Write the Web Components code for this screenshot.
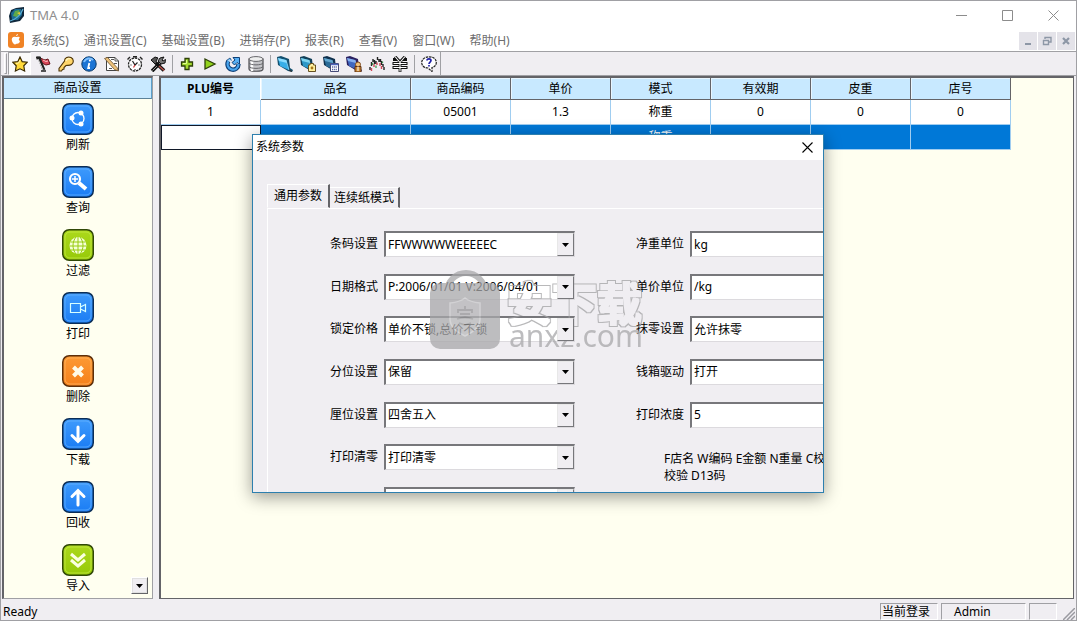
<!DOCTYPE html>
<html lang="zh-CN">
<head>
<meta charset="utf-8">
<title>TMA 4.0</title>
<style>
  html, body { margin: 0; height: 100%; }
  body {
    font: 12px/16px "Noto Sans", "Noto Sans CJK SC", sans-serif;
    color: #000;
    overflow: hidden;
    --face: #f0eef2;
    --cream: #fffff0;
    --head: #c8e9ff;
    --select: #0078d7;
    --dark: #646468;
    --mid: #a0a0a4;
  }
</style>
</head>
<body>
<app-window></app-window>

<script>
const reset = `
  *, *::before { box-sizing: border-box; }
  button { font: inherit; color: inherit; background: none; border: 0; padding: 0; margin: 0; }
  svg { display: block; }
`;

function element(name, render) {
  customElements.define(name, class extends HTMLElement {
    connectedCallback() {
      if (this.shadowRoot) return;
      const t = document.createElement('template');
      t.innerHTML = render(this);
      this.attachShadow({ mode: 'open' }).append(t.content.cloneNode(true));
    }
  });
}

/* ---------- icons ---------- */
const folder = (light, face, back) => `
  <path d="M0 1 4 0 12 3 13 12 16 14 15 16 11 15 1 9Z" fill="${back}"/>
  <path d="M1 2 9 4 12 14 3 10Z" fill="${face}"/><path d="M1 2 9 4 10 7 2 5Z" fill="${light}"/>
  <path d="M9 4 12 14" stroke="${light}" stroke-width=".8"/><path d="M12 14 15 15.500" stroke="#333" stroke-width="1.200"/>`;
const toolIcons = {
  star: `<path d="M8 1 10.2 5.7 15.3 6.2 11.8 9.8 12.6 15 8 12.8 3.4 15 4.2 9.8.7 6.2 5.8 5.7Z" fill="#ffd93a" stroke="#3a2a00" stroke-width="1.2"/><path d="M8 4 6.6 7 4 7.4" stroke="#fff6b0" fill="none"/>`,
  flag: `<path d="M5 2 10 4 13 3 15 8 11 9 7 7Z" fill="#d8485a" stroke="#641218"/><path d="M8 4 11 5.500 13 5" stroke="#ffc0c0" fill="none"/><path d="M1.500 2 4 2 9 14" stroke="#222" stroke-width="3" fill="none"/><path d="M3 3 8 14" stroke="#ddd" stroke-width="1"/><path d="M1 1.500H6M6 15H11" stroke="#222" stroke-width="1.400"/>`,
  key: `<path d="M6.500 5C6.500 1.500 10 .5 13 1.500 16 3 16 7 13.500 8.500 11 10 9 9 8 9.500L6 11.500V13L4.500 13.500 3.500 15 1 15 1 12.500Z" fill="#ffd56a" stroke="#4d3408" stroke-width="1.100"/><path d="M8 5C8.500 2.500 11 2 12.500 3" stroke="#fff2b8" stroke-width="1.500" fill="none"/>`,
  info: `<circle cx="8" cy="8" r="7.2" fill="#1c74d4" stroke="#083868"/><path d="M3 6A5.5 5.5 0 0 1 12 4" stroke="#7ec0ff" stroke-width="2" fill="none"/><path d="M8.3 7 7.2 12H9" stroke="#fff" stroke-width="1.8" fill="none"/><circle cx="8.9" cy="4.5" r="1.1" fill="#fff"/>`,
  edit: `<path d="M2.500 1.500H11L14.500 5V14.500H2.500Z" fill="#fff" stroke="#444"/><path d="M11 1.500V5H14.500M7 3.500H10M5 12.500H8M10 7.500H13" stroke="#555" fill="none"/><path d="M.5 2.500 3.500 1.500 13 11.500 14.500 15 10.500 13.500Z" fill="#edc27a" stroke="#6a5030" stroke-width=".8"/>`,
  clock: `<circle cx="8" cy="8.500" r="6.500" fill="#fff" stroke="#222" stroke-width="1.300" stroke-dasharray="2.500 .8"/><path d="M5.500 5 8 9 10.500 6.500" stroke="#222" stroke-width="1.200" fill="none"/><path d="M8 9 6.500 11.500" stroke="#c33" stroke-width="1.200"/><path d="M.5 3.500 3 1M13 1 15.500 3.500M6 .8H10" stroke="#222" stroke-width="1.400"/><path d="M3.500 9H4.500M11.500 9H12.500M8 13V14" stroke="#222"/>`,
  tools: `<path d="M2 15 12 5" stroke="#111" stroke-width="3.600"/><path d="M2.500 14.500 11 6" stroke="#999" stroke-width="1"/><path d="M10 2 14 1 12 4 13 5 15.500 3.500 15 7 11 8 8 5Z" fill="#777" stroke="#111"/><path d="M1 4 5 1 8 2 6 5 7 7 5 8 3 6Z" fill="#555" stroke="#111"/><path d="M6 7 14 14.500" stroke="#111" stroke-width="3.600"/><path d="M9 10 14 14.500" stroke="#b55048" stroke-width="1.600"/>`,
  plus: `<path d="M6 2.500H10V6H13.500V10H10V13.500H6V10H2.500V6H6Z" fill="#a4da30" stroke="#2d4008" stroke-width="1.300"/><path d="M7.500 4V7.500H4" stroke="#e0ff90" fill="none"/>`,
  play: `<path d="M3 3 13 8 3 13Z" fill="#93d31d" stroke="#2d4008" stroke-width="1.300"/>`,
  reload: `<path d="M3.500 5A5.500 5.500 0 1 0 13.500 8" stroke="#0d3f77" stroke-width="4.400" fill="none"/><path d="M8 1.500H14.500V8.500L12 6.500 9.500 9 7 6.500 10 4Z" fill="#58b0f4" stroke="#0d3f77"/><path d="M3.500 5A5.500 5.500 0 1 0 13.500 8" stroke="#49a5ee" stroke-width="2.200" fill="none"/><path d="M1.500 4.500 5 2 6.500 4.500" fill="#7cc6fa" stroke="#0d3f77" stroke-width=".8"/>`,
  database: `<path d="M1 3V13C1 16 15 16 15 13V3Z" fill="#c4c4c8" stroke="#4c4c50" stroke-width="1.200"/><path d="M4 5V15" stroke="#fff" stroke-width="2.500"/><ellipse cx="8" cy="3" rx="7" ry="2.400" fill="#eee" stroke="#66666a"/><path d="M1 7C2 9.500 14 9.500 15 7M1 10.500C2 13 14 13 15 10.500" stroke="#66666a" fill="none"/>`,
  folder1: folder('#8adcff', '#36aee8', '#14506f'),
  folder2: folder('#7ed4f0', '#2c98c8', '#123f58') + `<path d="M8.500 9 10 9 10 7.500H13.500V9H15.500V15.500H8.500Z" fill="#fff1a0" stroke="#665020"/><circle cx="12" cy="12" r="1.400" fill="#a87818"/>`,
  folder3: folder('#64a8d0', '#2c6c98', '#10304c') + `<path d="M7.500 7.500H15.500V15.500H7.500Z" fill="#fff" stroke="#444a78"/><path d="M8 8.500H15" stroke="#4c65bd" stroke-width="1.500"/><path d="M9 11H14M9 13.500H14" stroke="#5060a0" stroke-width="1.300" stroke-dasharray="1.300 .8"/>`,
  folder4: folder('#86b0f0', '#4068c0', '#2a2060') + `<circle cx="12" cy="8.500" r="2.500" fill="#f2c27a" stroke="#7d4a20"/><path d="M9 10.500H15V16H9Z" fill="#ca8934" stroke="#603010"/><path d="M12 10.500V15" stroke="#fff"/>`,
  chart: `<path d="M1 14V11M2.500 10V6M4 6V3M5.500 4V8M7 8V5M8.500 4V1M10 3V6M11.500 6V3M12.500 5V9M14 8V11M15 11V14" stroke="#222" stroke-width="1.400"/><path d="M2.500 15V12M5 11V8M8 9V6.500M11 10V7M12.500 13V10" stroke="#d04858" stroke-width="1.400"/><path d="M3.500 9V7M13.500 7V5.500M7 12V9.500" stroke="#3f9c50" stroke-width="1.300"/>`,
  yen: `<path d="M3 .5 8 6 13 .5M8 5V16M1 3.500H4.500M11.500 3.500H15M.5 7.500H15.500M.5 11.500H15.500" stroke="#111" stroke-width="2.800" fill="none"/><path d="M3 .5 8 6.500 13 .5M8 6V15.500M1.500 7.500H14.500M1.500 11.500H14.500" stroke="#fff" stroke-width="1.100" fill="none"/>`,
  help: `<path d="M8 .8C13 .8 15.300 3.500 15.300 6.500S13 11 11 11.500L11 15.500 7 12C3 12 .7 9.500 .7 6.500S4 .8 8 .8Z" fill="#fff" stroke="#222" stroke-width="1.200" stroke-dasharray="2.500 .8"/><path d="M6 4.500C6 2.200 10 2.200 10 4.500 10 6 8 6.200 8 8M8 9V10.500" stroke="#2020a8" stroke-width="1.700" fill="none"/>`
};
const sideIcons = {
  share: `<circle cx="16" cy="15.500" r="6" fill="none" stroke="#fff" stroke-width="1.300"/><circle cx="10" cy="15" r="2.500" fill="#fff"/><circle cx="19" cy="10" r="2.500" fill="#fff"/><circle cx="19" cy="21" r="2.500" fill="#fff"/>`,
  search: `<circle cx="13" cy="13" r="5" fill="none" stroke="#fff" stroke-width="2.200"/><path d="M13 10V16M10 13H16" stroke="#fff" stroke-width="1.500"/><path d="M17 17 24 23" stroke="#fff" stroke-width="4"/>`,
  globe: `<circle cx="16" cy="16.500" r="8.500" fill="#f6ffd8"/><path d="M16 8V25M8.500 13H23.500M7.500 17H24.500M8.500 21H23.500M14 8C10 13 10 20 14 25M18 8C22 13 22 20 18 25" stroke="#96cb10" fill="none"/>`,
  video: `<path d="M8.500 11.500H18.500V20.500H8.500ZM18.500 15 23.500 12.500V19.500L18.500 17" stroke="#d8ffff" stroke-width="1.200" fill="none"/>`,
  cross: `<path d="M11.500 12 20.500 21M20.500 12 11.500 21" stroke="#fffbe8" stroke-width="4" fill="none"/>`,
  down: `<path d="M16 9V23M10 17.500 16 23.500 22 17.500" stroke="#fff" stroke-width="3" fill="none" stroke-linecap="round"/>`,
  up: `<path d="M16 24V10M10 15.500 16 9.500 22 15.500" stroke="#fff" stroke-width="3" fill="none" stroke-linecap="round"/>`,
  chevrons: `<path d="M9 10 16 16 23 10M9 16 16 22 23 16" stroke="#faffe0" stroke-width="3" fill="none"/>`
};
const tileColours = {
  blue: ['#3f9bfc', '#1a7cf4', '#0b2e57', '#6bb6ff'],
  green: ['#acd91c', '#96c908', '#304806', '#c8ec4c'],
  orange: ['#fd9a34', '#f5801a', '#5d2f0a', '#ffb968']
};

/* ---------- window frame ---------- */
element('app-window', () => `
  <style>${reset}
    :host { display: flex; flex-direction: column; position: relative; height: 100vh; box-sizing: border-box;
      border: 1px solid var(--mid); background: var(--face); overflow: hidden; }
    main { flex: 1; min-height: 0; display: flex; gap: 6px; padding: 0 1px; }
    side-panel { flex: none; }
    data-grid { flex: 1; min-width: 0; }
    param-dialog { position: absolute; left: 251px; top: 133px; }
    site-mark { position: absolute; left: 429px; top: 268px; }
  </style>
  <title-bar>TMA 4.0</title-bar>
  <menu-bar></menu-bar>
  <tool-bar></tool-bar>
  <main><side-panel></side-panel><data-grid></data-grid></main>
  <status-bar></status-bar>
  <param-dialog></param-dialog>
  <site-mark></site-mark>
`);

element('title-bar', () => `
  <style>${reset}
    :host { display: flex; align-items: center; height: 30px; padding-bottom: 2px; box-sizing: border-box; flex: none; background: #fff; color: #8f8f8f; font-size: 13px; }
    .logo { margin: 0 5px 0 8px; }
    .name { flex: 1; }
    button { width: 46px; height: 28px; display: grid; place-items: center; }
  </style>
  <svg class="logo" width="16" height="16" viewBox="0 0 16 16"><path d="M2 3 7 1 15 0 15 9 11 14 1 16 0 9Z" fill="#10283c"/><path d="M2 6 6 2 12 2 13 8 9 13 3 13Z" fill="#1c6c94"/><path d="M6 4 10 3 11 6 8 10 4 9Z" fill="#5fa848"/><path d="M1 14C6 13 12 8 14 2" stroke="#5cb0d6" stroke-width="1.200" fill="none"/><path d="M8 6 11 5 11 8Z" fill="#e0c53a"/></svg>
  <span class="name"><slot></slot></span>
  <button aria-label="最小化"><svg width="11" height="11"><path d="M0 5.500H11" stroke="#8c8c8c"/></svg></button>
  <button aria-label="最大化"><svg width="11" height="11"><path d="M.5.5H10.500V10.500H.5Z" stroke="#8c8c8c" fill="none"/></svg></button>
  <button aria-label="关闭"><svg width="11" height="11"><path d="M.5.5 10.500 10.500M10.500.5.5 10.500" stroke="#8c8c8c" fill="none"/></svg></button>
`);

element('menu-bar', () => `
  <style>${reset}
    :host { display: flex; height: 21px; flex: none; background: #fff; border-bottom: 1px solid var(--mid); color: #6d6d6d; }
    .logo { margin: 1px 0 0 7px; }
    nav { flex: 1; display: flex; gap: 1px; }
    nav button { padding: 0 7px; height: 20px; line-height: 20px; white-space: nowrap; }
    .mdi { display: flex; gap: 1px; padding: 1px 1px 1px 0; }
    .mdi button { width: 18px; height: 18px; background: #e4e3e9; display: grid; place-items: center; }
  </style>
  <svg class="logo" width="16" height="16" viewBox="0 0 16 16"><rect width="16" height="16" rx="3" fill="#f08326"/><path d="M8 5C5 4 3 6 4 9S7 13 8 12 11 13 12 9C10 8 11 6 12 6 11 4 9 5 8 5ZM8 4C8 3 9 2 10 2 10 3 9 4 8 4Z" fill="#fff"/></svg>
  <nav>${['系统(S)', '通讯设置(C)', '基础设置(B)', '进销存(P)', '报表(R)', '查看(V)', '窗口(W)', '帮助(H)'].map(t => `<button>${t}</button>`).join('')}</nav>
  <div class="mdi">
    <button aria-label="最小化"><svg width="10" height="10"><path d="M2 8H8" stroke="#8d97a6" stroke-width="2"/></svg></button>
    <button aria-label="还原"><svg width="10" height="10"><path d="M3 3V1.500H9V6H7M1 4.500H6.500V8.500H1.500V4" stroke="#8d97a6" stroke-width="1.400" fill="none"/></svg></button>
    <button aria-label="关闭"><svg width="10" height="10"><path d="M2 2 8 8M8 2 2 8" stroke="#8d97a6" stroke-width="2.200"/></svg></button>
  </div>
`);

element('tool-button', el => `
  <style>${reset}
    :host { display: block; width: 23px; height: 23px; }
    button { width: 23px; height: 23px; display: grid; place-items: center; border: 1px solid transparent; }
    :host([pressed]) button { background: #fafafa; border-color: var(--mid) #fff #fff var(--mid); }
  </style>
  <button aria-label="${el.getAttribute('label')}"><svg width="16" height="16" viewBox="0 0 16 16">${toolIcons[el.getAttribute('icon')]}</svg></button>
`);

element('tool-bar', () => {
  const group = list => list.map(([i, l]) => `<tool-button icon="${i}" label="${l}"${i === 'star' ? ' pressed' : ''}></tool-button>`).join('');
  return `
  <style>${reset}
    :host { display: flex; height: 24px; flex: none; background: var(--face); border-bottom: 1px solid var(--mid); }
    .bar { display: flex; padding-left: 3px; border-right: 1px solid var(--mid); }
    .grip { width: 3px; margin: 1px 1px 1px 0; border: 1px solid; border-color: #fff var(--mid) var(--mid) #fff; }
    hr { width: 1px; height: 18px; margin: 3px 2px 3px 3px; border: 0; background: var(--mid); }
  </style>
  <div class="bar"><span class="grip"></span>
    ${group([['star', '收藏'], ['flag', '标记'], ['key', '登录'], ['info', '信息'], ['edit', '编辑'], ['clock', '时间'], ['tools', '工具']])}<hr>
    ${group([['plus', '添加'], ['play', '执行'], ['reload', '刷新'], ['database', '数据库']])}<hr>
    ${group([['folder1', '商品'], ['folder2', '标签'], ['folder3', '报表'], ['folder4', '用户'], ['chart', '统计'], ['yen', '金额']])}<hr>
    ${group([['help', '帮助']])}
  </div>`;
});

/* ---------- side panel ---------- */
element('side-item', el => {
  const [a, b, edge, lit] = tileColours[el.getAttribute('colour')];
  return `
  <style>${reset}
    :host { display: block; height: 63px; }
    button { display: grid; justify-items: center; gap: 2px; width: 100%; line-height: 16px; }
  </style>
  <button><svg width="32" height="32" viewBox="0 0 32 32">
    <defs><linearGradient id="g" x2="0" y2="1"><stop stop-color="${a}"/><stop offset="1" stop-color="${b}"/></linearGradient></defs>
    <rect x=".75" y=".75" width="30.500" height="30.500" rx="6.500" fill="url(#g)" stroke="${edge}" stroke-width="1.500"/>
    <rect x="3" y="3" width="26" height="26" rx="5" fill="none" stroke="${lit}" stroke-width="1" opacity=".7"/>
    ${sideIcons[el.getAttribute('icon')]}</svg><slot></slot></button>`;
});

element('side-panel', () => `
  <style>${reset}
    :host { display: flex; flex-direction: column; position: relative; width: 151px; box-sizing: border-box; background: var(--cream);
      border: 1px solid var(--mid); border-left: 2px solid var(--dark); border-top: 2px solid var(--dark); overflow: hidden; margin-bottom: 1px; }
    h2 { margin: 0; height: 21px; flex: none; font: inherit; line-height: 20px; text-align: center; background: var(--head);
      border-right: 1px solid #5c9fcc; border-bottom: 1px solid #5c8299; }
    .items { padding-top: 4px; }
    .more { position: absolute; right: 4px; bottom: 4px; width: 17px; height: 17px; background: var(--face); display: grid; place-items: center;
      border: 1px solid; border-color: #fff var(--dark) var(--dark) #fff; outline: 1px solid #e0e0e0; outline-offset: -2px; }
  </style>
  <h2>商品设置</h2>
  <div class="items">
    <side-item icon="share" colour="blue">刷新</side-item>
    <side-item icon="search" colour="blue">查询</side-item>
    <side-item icon="globe" colour="green">过滤</side-item>
    <side-item icon="video" colour="blue">打印</side-item>
    <side-item icon="cross" colour="orange">删除</side-item>
    <side-item icon="down" colour="blue">下载</side-item>
    <side-item icon="up" colour="blue">回收</side-item>
    <side-item icon="chevrons" colour="green">导入</side-item>
  </div>
  <button class="more" aria-label="更多"><svg width="7" height="4"><path d="M0 0H7L3.500 4Z"/></svg></button>
`);

/* ---------- product table ---------- */
element('data-grid', () => {
  const heads = ['PLU编号', '品名', '商品编码', '单价', '模式', '有效期', '皮重', '店号'];
  const rows = [['1', 'asdddfd', '05001', '1.3', '称重', '0', '0', '0'], ['', '', '', '', '称重', '', '', '']];
  return `
  <style>${reset}
    :host { display: block; box-sizing: border-box; background: var(--cream); border: 2px solid var(--dark); border-right-width: 1px; border-bottom-width: 1px;
      overflow: hidden; margin: 0 1px 1px 0; }
    table { table-layout: fixed; width: 850px; border-collapse: separate; border-spacing: 0; text-align: center; }
    col { width: 100px; }
    col.wide { width: 150px; }
    th { height: 22px; padding: 0; font-weight: normal; background: var(--head); border-right: 1px solid var(--dark); border-bottom: 1px solid var(--dark); box-shadow: inset 1px 1px #e8f6ff; }
    th:first-child { font-weight: bold; border-right-color: #fff; border-bottom-color: var(--head); box-shadow: none; }
    td { height: 25px; padding: 0; background: #fff; border-right: 1px solid #a0cdf0; border-bottom: 1px solid #a0cdf0; }
    tr.current td { background: var(--select); color: #fff; }
    tr.current td:first-child { background: #fff; border: 1px solid #101828; }
  </style>
  <table>
    <colgroup>${heads.map((h, i) => `<col${i === 1 ? ' class="wide"' : ''}>`).join('')}</colgroup>
    <thead><tr>${heads.map(h => `<th scope="col">${h}</th>`).join('')}</tr></thead>
    <tbody>${rows.map((r, i) => `<tr${i ? ' class="current"' : ''}>${r.map(c => `<td>${c}</td>`).join('')}</tr>`).join('')}</tbody>
  </table>`;
});

element('status-bar', () => `
  <style>${reset}
    :host { display: flex; align-items: stretch; gap: 3px; height: 20px; box-sizing: border-box; flex: none; padding: 3px 0 0 2px; background: var(--face); }
    span { line-height: 17px; white-space: nowrap; }
    .ready { flex: 1; }
    .pane { border: 1px solid; border-color: var(--mid) #fff #fff var(--mid); line-height: 15px; }
    .who { width: 58px; padding-left: 1px; }
    .name { width: 85px; padding-left: 12px; }
    .spare { width: 28px; }
    svg { margin: 5px 1px 0 3px; }
  </style>
  <span class="ready">Ready</span>
  <span class="pane who">当前登录</span>
  <span class="pane name">Admin</span>
  <span class="pane spare"></span>
  <svg width="12" height="12"><path d="M0 12 12 0M4 12 12 4M8 12 12 8" stroke="#9a9aa0" stroke-width="1.500"/></svg>
`);

/* ---------- parameter dialog ---------- */
element('combo-field', el => `
  <style>${reset}
    :host { display: grid; grid-template-columns: 109px 191px; gap: 6px; height: 23px; }
    label { text-align: right; line-height: 26px; white-space: nowrap; }
    .box { display: grid; grid-template-columns: 1fr 17px; border: 2px solid; border-color: #77777b #dcdade #dcdade #77777b; border-right-width: 1px; border-bottom-width: 1px; background: #fff; }
    select { grid-area: 1 / 1 / 2 / 3; appearance: none; min-width: 0; margin: 0; padding: 0 18px 0 2px; border: 0; border-radius: 0; background: #fff; color: #000;
      font: inherit; line-height: 18px; outline: 0; }
    i { grid-area: 1 / 2; z-index: 1; pointer-events: none; display: grid; place-items: center; background: var(--face);
      border: 1px solid; border-color: #e8e8e8 #77777b #77777b #e8e8e8; }
  </style>
  <label for="s">${el.getAttribute('label') || ''}</label>
  <div class="box"><select id="s"${el.hasAttribute('label') ? '' : ' aria-label="参数"'}><option>${el.textContent}</option></select>
  <i><svg width="7" height="4"><path d="M0 0H7L3.500 4Z"/></svg></i></div>
`);

element('param-dialog', () => `
  <style>${reset}
    :host { display: block; width: 572px; height: 359px; box-sizing: border-box; border: 1px solid #2d7fae; background: var(--face); overflow: hidden;
      box-shadow: 0 4px 16px rgba(0, 0, 0, .4); }
    header { display: flex; justify-content: space-between; align-items: center; height: 25px; padding: 0 10px 1px 3px; background: #fff; }
    .tabs { display: flex; align-items: flex-end; height: 24px; margin: 24px 0 0 14px; }
    .tabs button { height: 21px; padding: 0 4px; line-height: 20px; border: 1px solid; border-color: #fff var(--dark) transparent #fff; border-left: 0; border-right-width: 2px; }
    .tabs button[aria-selected=true] { height: 24px; padding: 0 6px; line-height: 20px; border-left: 1px solid #fff; }
    .panel { display: grid; grid-template-columns: 306px 306px; grid-template-rows: repeat(7, 23px); align-content: space-between;
      height: 302px; margin-left: 14px; padding: 22px 0 0 1px; border-top: 1px solid #fff; border-left: 1px solid #fff; }
    p { margin: 6px 0 0 89px; line-height: 17px; white-space: nowrap; }
  </style>
  <header>系统参数<button aria-label="关闭"><svg width="11" height="11"><path d="M.5.5 10.500 10.500M10.500.5.5 10.500" stroke="#000" stroke-width="1.100"/></svg></button></header>
  <div class="tabs" role="tablist"><button role="tab" aria-selected="true">通用参数</button><button role="tab">连续纸模式</button></div>
  <div class="panel">
    <combo-field label="条码设置">FFWWWWWEEEEEC</combo-field><combo-field label="净重单位">kg</combo-field>
    <combo-field label="日期格式">P:2006/01/01 V:2006/04/01</combo-field><combo-field label="单价单位">/kg</combo-field>
    <combo-field label="锁定价格">单价不锁,总价不锁</combo-field><combo-field label="抹零设置">允许抹零</combo-field>
    <combo-field label="分位设置">保留</combo-field><combo-field label="钱箱驱动">打开</combo-field>
    <combo-field label="厘位设置">四舍五入</combo-field><combo-field label="打印浓度">5</combo-field>
    <combo-field label="打印清零">打印清零</combo-field><p>F店名 W编码 E金额 N重量 C校<br>校验 D13码</p>
    <combo-field></combo-field>
  </div>
`);

/* ---------- translucent site mark ---------- */
element('site-mark', () => `
  <style>${reset}
    :host { display: flex; gap: 3px; pointer-events: none; opacity: .75; }
    .cn { font-size: 45px; font-weight: bold; fill: #a2a2a4; }
    .en { font-size: 30px; line-height: 28px; color: #a8a8aa; padding-left: 5px; margin-top: -13px; white-space: nowrap; }
  </style>
  <svg width="71" height="80" viewBox="0 0 71 80">
    <path d="M17 23A19 19 0 0 1 55 23" fill="none" stroke="#a8a8aa" stroke-width="6"/>
    <rect y="14" width="70" height="66" rx="10" fill="#a8a8aa"/>
    <path d="M20 34Q30 33 35 29 40 33 50 34V50Q50 60 35 67 20 60 20 50Z" fill="#b4b4b6" stroke="#c8c8ca" stroke-width="1.500"/>
    <path d="M35 37V41M28 44V41H42V44M30 45H40M27 50Q35 47 43 50M29 54 35 56 41 54" stroke="#949496" stroke-width="1.800" fill="none"/>
  </svg>
  <div class="words">
    <svg width="146" height="66" viewBox="0 0 146 66">
      <!-- keeps only the rim of the thickened glyphs -->
      <filter id="rim" x="-5%" y="-10%" width="110%" height="120%">
        <feMorphology in="SourceAlpha" operator="dilate" radius="1" result="inner"/>
        <feMorphology in="SourceGraphic" operator="dilate" radius="2" result="outer"/>
        <feComposite in="outer" in2="inner" operator="out"/>
      </filter>
      <text class="cn" x="3" y="52" filter="url(#rim)">安下载</text>
    </svg>
    <div class="en">anxz.com</div>
  </div>
`);
</script>
</body>
</html>
